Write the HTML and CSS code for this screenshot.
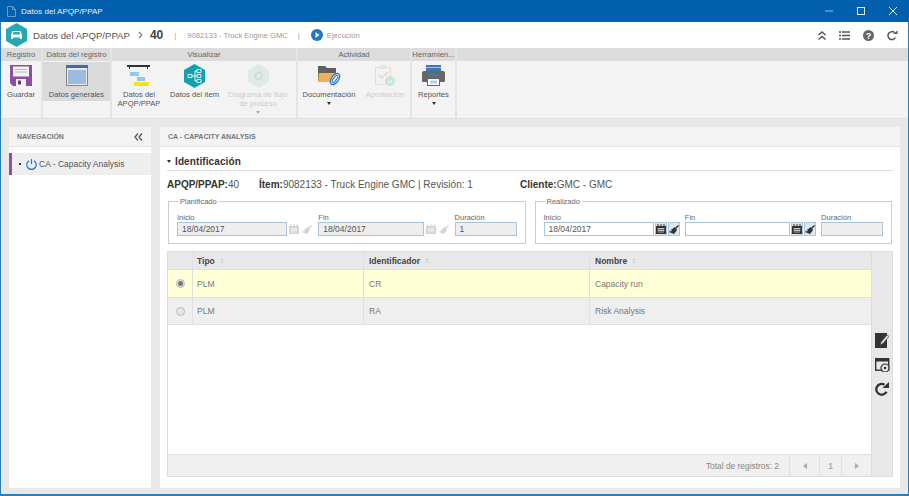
FILE: index.html
```html
<!DOCTYPE html>
<html lang="es">
<head>
<meta charset="utf-8">
<title>Datos del APQP/PPAP</title>
<link rel="stylesheet" href="styles.css">
</head>
<body>
<div class="window">
  <div class="titlebar">
    <svg class="doc-ico" width="9" height="11" viewBox="0 0 9 11"><path d="M.5 .5h5l3 3v7H.5z M5.500 .5v3h3" fill="none" stroke="#6b9cc8"/></svg>
    <span class="title-text">Datos del APQP/PPAP</span>
    <div class="win-btns">
      <svg width="10" height="10" viewBox="0 0 10 10"><path d="M1 5h8" stroke="#8fbbe0"/></svg>
      <svg width="10" height="10" viewBox="0 0 10 10"><rect x="1.500" y="1.500" width="7" height="7" fill="none" stroke="#e0edf8"/></svg>
      <svg width="10" height="10" viewBox="0 0 10 10"><path d="M1 1l8 8M9 1l-8 8" stroke="#e0edf8"/></svg>
    </div>
  </div>
  <div class="head">
    <svg class="logo" width="21" height="24" viewBox="0 0 21 24"><path d="M10.500 0L21 6V18L10.500 24L0 18V6z" fill="#2aa7b5"/><path d="M5 16v-4l1.500-4h8L16 12v4h-2v-1.500H7V16zM7.500 9L6.800 11.500h7.400L13.500 9z" fill="#fff" fill-rule="evenodd"/></svg>
    <span class="crumb">Datos del APQP/PPAP</span>
    <svg class="chev" width="5" height="8" viewBox="0 0 5 8"><path d="M1 1l3 3-3 3" fill="none" stroke="#777" stroke-width="1.100"/></svg>
    <span class="num">40</span>
    <span class="sep">|</span>
    <span class="item">9082133 - Truck Engine GMC</span>
    <span class="sep sep2">|</span>
    <svg class="play" width="12" height="12" viewBox="0 0 12 12"><circle cx="6" cy="6" r="6" fill="#1f78c8"/><path d="M4.500 3l4 3-4 3z" fill="#fff"/></svg>
    <span class="state">Ejecución</span>
    <div class="head-tools">
      <svg width="10" height="11" viewBox="0 0 10 11"><path d="M1.500 5l3.500-3 3.500 3M1.500 9.500l3.500-3 3.500 3" fill="none" stroke="#555" stroke-width="1.500"/></svg>
      <svg width="11" height="9" viewBox="0 0 11 9"><path d="M0 1h2M3 1h8M0 4.500h2M3 4.500h8M0 8h2M3 8h8" stroke="#555" stroke-width="1.400"/></svg>
      <svg width="11" height="11" viewBox="0 0 11 11"><circle cx="5.500" cy="5.500" r="5.500" fill="#666"/><text x="5.500" y="8.700" class="q">?</text></svg>
      <svg width="12" height="11" viewBox="0 0 12 11"><path d="M9.500 7.500A4 4 0 1 1 8.500 2.500" fill="none" stroke="#555" stroke-width="1.500"/><path d="M7 4h4.500V.5z" fill="#555"/></svg>
    </div>
  </div>

  <div class="ribbon">
    <section class="group g-reg">
      <h6>Registro</h6>
      <div class="g-body">
        <div class="rb">
          <svg width="22" height="21" viewBox="0 0 22 21"><path d="M0 0h22v21H3l-3-3z" fill="#8d4f9f"/><rect x="3" y="1.500" width="16" height="10" fill="#f2f2f2"/><path d="M5 4.500h12M5 7h12" stroke="#bbb"/><rect x="6" y="14" width="10" height="7" fill="#f2f2f2"/><rect x="8" y="15.500" width="3" height="4" fill="#6a3a7c"/></svg>
          <span>Guardar</span>
        </div>
      </div>
    </section>
    <section class="group g-dat">
      <h6>Datos del registro</h6>
      <div class="g-body">
        <div class="rb rb-active">
          <svg width="22" height="21" viewBox="0 0 22 21"><rect x=".5" y=".5" width="21" height="20" fill="#e8e8e8" stroke="#888"/><rect width="22" height="3" fill="#3c6ea8"/><rect x="2" y="5" width="18" height="14" fill="#9dbbdc"/></svg>
          <span>Datos generales</span>
        </div>
      </div>
    </section>
    <section class="group g-vis">
      <h6>Visualizar</h6>
      <div class="g-body">
        <div class="rb rb-1">
          <svg width="24" height="21" viewBox="0 0 24 21"><path d="M0 0h23v2h-2v2h-1V2H3v2H2V2H0z" fill="#333"/><rect x="3" y="7" width="9" height="4" fill="#8ec9f5"/><rect x="10" y="12" width="8" height="4" fill="#8ec9f5"/><rect x="7" y="17" width="15" height="4" fill="#f4e318"/></svg>
          <span>Datos del<br>APQP/PPAP</span>
        </div>
        <div class="rb rb-2">
          <svg width="21" height="24" viewBox="0 0 21 24"><path d="M10.500 0L21 6v12l-10.500 6L0 18V6z" fill="#14a0ad"/><path d="M13 5.500h4v3h-4zM13 10.500h4v3h-4zM13 15.500h4v3h-4zM4 10.500h4v3H4z" fill="none" stroke="#dff4f6"/><path d="M8 12h5M11 7v10h2M11 7h2" fill="none" stroke="#dff4f6"/></svg>
          <span>Datos del ítem</span>
        </div>
        <div class="rb rb-3 off">
          <svg width="21" height="24" viewBox="0 0 21 24"><path d="M10.500 0L21 6v12l-10.500 6L0 18V6z" fill="#dfeae7"/><path d="M7 12l3-4 4 1-1 6-5 0z" fill="none" stroke="#c4d6d2"/></svg>
          <span>Diagrama de flujo<br>de proceso</span>
          <i class="caret"></i>
        </div>
      </div>
    </section>
    <section class="group g-act">
      <h6>Actividad</h6>
      <div class="g-body">
        <div class="rb rb-4">
          <svg width="23" height="21" viewBox="0 0 23 21"><path d="M0 1h7l2 2h9v3H0z" fill="#5f5f5f"/><path d="M0 17V5h18v12z" fill="#5f5f5f"/><path d="M1 8h18l-1 9H0z" fill="#eeb158"/><ellipse cx="17" cy="14" rx="3.500" ry="6.500" transform="rotate(35 17 14)" fill="#f2f2f2" stroke="#2e78c4" stroke-width="1.300"/><ellipse cx="17" cy="14" rx="1.500" ry="4.500" transform="rotate(35 17 14)" fill="none" stroke="#2e78c4"/></svg>
          <span>Documentación</span>
          <i class="caret dark"></i>
        </div>
        <div class="rb rb-5 off">
          <svg width="20" height="21" viewBox="0 0 20 21"><rect x=".5" y="2.500" width="15" height="17" fill="none" stroke="#eadfca"/><rect x="5" y="0" width="6" height="4" fill="#e5e5e5"/><path d="M4 10l3 3 6-6" fill="none" stroke="#f0cfc8" stroke-width="1.500"/><circle cx="15" cy="16" r="5" fill="#c8e4dc"/><path d="M12.500 16l2 2 3-3.500" fill="none" stroke="#fff"/></svg>
          <span>Aprobación</span>
        </div>
      </div>
    </section>
    <section class="group g-her">
      <h6>Herramien...</h6>
      <div class="g-body">
        <div class="rb rb-6">
          <svg width="23" height="21" viewBox="0 0 23 21"><rect x="4" y="0" width="15" height="8" fill="#3f77b5"/><rect x="4" y="2" width="15" height="1" fill="#a8c6e6"/><path d="M2 6h19a2 2 0 0 1 2 2v8a1 1 0 0 1-1 1H1a1 1 0 0 1-1-1V8a2 2 0 0 1 2-2z" fill="#666"/><rect x="5" y="9" width="13" height="2" fill="#3f77b5"/><rect x="5.500" y="13.500" width="12" height="7" fill="#fff" stroke="#666"/><rect x="8" y="15.500" width="7" height="3" fill="#b6cfe8"/></svg>
          <span>Reportes</span>
          <i class="caret dark"></i>
        </div>
      </div>
    </section>
    <section class="group g-fill">
      <h6></h6>
      <div class="g-body"></div>
    </section>
  </div>

  <div class="content">
    <aside class="nav">
      <div class="panel-head">
        <span>NAVEGACIÓN</span>
        <svg width="9" height="8" viewBox="0 0 9 8"><path d="M4 .5L1 4l3 3.500M8 .5L5 4l3 3.500" fill="none" stroke="#555" stroke-width="1.300"/></svg>
      </div>
      <div class="nav-item">
        <span class="bullet"></span>
        <svg width="11" height="11" viewBox="0 0 11 11"><path d="M5.500 0v5" stroke="#1f78c8" stroke-width="1.200"/><path d="M3 1.700a4.700 4.700 0 1 0 5 0" fill="none" stroke="#1f78c8" stroke-width="1.200"/></svg>
        <span>CA - Capacity Analysis</span>
      </div>
    </aside>

    <main class="main">
      <div class="panel-head main-head"><span>CA - CAPACITY ANALYSIS</span></div>
      <div class="main-body">
        <div class="sec-title"><i class="caret dark"></i><span>Identificación</span></div>
        <div class="info">
          <div class="info-a"><b>APQP/PPAP:</b>40</div>
          <div class="info-b"><b>Ítem:</b>9082133 - Truck Engine GMC | Revisión: 1</div>
          <div class="info-c"><b>Cliente:</b>GMC - GMC</div>
        </div>
        <div class="sets">
          <fieldset class="set">
            <legend>Planificado</legend>
            <div class="field f-date">
              <label>Inicio</label>
              <div class="ctl"><div class="input ro">18/04/2017</div><span class="btn-cal off-b"><svg width="10" height="10" viewBox="0 0 10 10"><use href="#cal"/></svg></span><span class="btn-cal off-b"><svg width="10" height="10" viewBox="0 0 10 10"><use href="#brush"/></svg></span></div>
            </div>
            <div class="field f-date f-date2">
              <label>Fin</label>
              <div class="ctl"><div class="input ro">18/04/2017</div><span class="btn-cal off-b"><svg width="10" height="10" viewBox="0 0 10 10"><use href="#cal"/></svg></span><span class="btn-cal off-b"><svg width="10" height="10" viewBox="0 0 10 10"><use href="#brush"/></svg></span></div>
            </div>
            <div class="field f-dur">
              <label>Duración</label>
              <div class="ctl"><div class="input ro">1</div></div>
            </div>
          </fieldset>
          <fieldset class="set">
            <legend>Realizado</legend>
            <div class="field f-date">
              <label>Inicio</label>
              <div class="ctl"><div class="input">18/04/2017</div><span class="btn-cal on-b"><svg width="10" height="10" viewBox="0 0 10 10"><use href="#cal"/></svg></span><span class="btn-cal on-b"><svg width="10" height="10" viewBox="0 0 10 10"><use href="#brush"/></svg></span></div>
            </div>
            <div class="field f-date f-date2">
              <label>Fin</label>
              <div class="ctl"><div class="input"></div><span class="btn-cal on-b"><svg width="10" height="10" viewBox="0 0 10 10"><use href="#cal"/></svg></span><span class="btn-cal on-b"><svg width="10" height="10" viewBox="0 0 10 10"><use href="#brush"/></svg></span></div>
            </div>
            <div class="field f-dur">
              <label>Duración</label>
              <div class="ctl"><div class="input ro"></div></div>
            </div>
          </fieldset>
        </div>

        <div class="grid-wrap">
          <div class="grid-left">
            <div class="row row-h">
              <div class="c c0"></div>
              <div class="c c1">Tipo <i class="sort"></i></div>
              <div class="c c2">Identificador <i class="sort"></i></div>
              <div class="c c3">Nombre <i class="sort"></i></div>
            </div>
            <div class="row row-sel">
              <div class="c c0"><span class="radio checked"></span></div>
              <div class="c c1">PLM</div>
              <div class="c c2">CR</div>
              <div class="c c3">Capacity run</div>
            </div>
            <div class="row row-alt">
              <div class="c c0"><span class="radio"></span></div>
              <div class="c c1">PLM</div>
              <div class="c c2">RA</div>
              <div class="c c3">Risk Analysis</div>
            </div>
            <div class="grid-empty"></div>
            <div class="grid-foot">
              <span class="total">Total de registros: 2</span>
              <span class="pg"><i class="tri-l"></i></span>
              <span class="pg pg-n">1</span>
              <span class="pg"><i class="tri-r"></i></span>
            </div>
          </div>
          <div class="grid-tools">
            <svg width="14" height="15" viewBox="0 0 14 15"><rect width="12" height="15" fill="#333"/><path d="M5 12l1-3 6-7 2 1.500-6 7z" fill="#ddd" stroke="#333" stroke-width=".6"/></svg>
            <svg width="15" height="14" viewBox="0 0 15 14"><rect x=".7" y=".7" width="13" height="11.500" fill="none" stroke="#333" stroke-width="1.400"/><rect x="1" y="1" width="13" height="2.500" fill="#333"/><circle cx="10" cy="10" r="4" fill="#e6e6e6" stroke="#333" stroke-width="1.200"/><circle cx="10" cy="10" r="1.300" fill="#333"/></svg>
            <svg width="14" height="14" viewBox="0 0 14 14"><path d="M11.500 9.800A5.400 5.400 0 1 1 9.500 2.700" fill="none" stroke="#333" stroke-width="2.300"/><path d="M7.500 6H14V0z" fill="#333"/></svg>
          </div>
        </div>
      </div>
    </main>
  </div>
</div>
<svg class="defs" width="0" height="0">
  <symbol id="cal" viewBox="0 0 10 10"><path d="M0 2h10v8H0z" fill="currentColor"/><path d="M2 0v3M5 0v3M8 0v3" stroke="currentColor"/><path d="M1.500 4.500h7M1.500 6.500h7M3 4v5M5 4v5M7 4v5" stroke="#fff" stroke-width=".6"/></symbol>
  <symbol id="brush" viewBox="0 0 10 10"><path d="M6 4l3-3 1 1-3 3z" fill="currentColor"/><path d="M6 3l2 3-3 4-5-2 1-1 1 .5 1-1.500-2 .5z" fill="currentColor"/></symbol>
</svg>
</body>
</html>
```

FILE: styles.css
```css
* { box-sizing: border-box; }
html, body { margin: 0; padding: 0; }
body { width: 909px; height: 496px; overflow: hidden; font-family: "Liberation Sans", Arial, sans-serif; color: #444; }
.defs { display: block; height: 0; }
.window { width: 909px; height: 496px; display: flex; flex-direction: column; border: 1px solid #2a7cc0; border-top: 0; border-bottom-width: 2px; background: #e8e8e8; }

.titlebar { height: 22px; flex: none; margin: 0 -1px; background: #0060ae; display: flex; align-items: center; padding-left: 7px; color: #e6f0f8; font-size: 8.100px; }
.doc-ico { margin-right: 5px; }
.win-btns { margin-left: auto; display: flex; gap: 22px; padding-right: 11px; }

.head { height: 26px; flex: none; background: #fff; display: flex; align-items: center; padding-left: 5px; }
.crumb { margin-left: 6px; font-size: 9.600px; color: #555; }
.chev { margin-left: 8px; }
.num { margin-left: 7px; font-size: 12px; font-weight: bold; color: #444; }
.sep { margin-left: 11px; font-size: 8px; color: #aaa; }
.item { margin-left: 11px; font-size: 7.600px; color: #999; }
.sep2 { margin-left: 10px; }
.play { margin-left: 11px; }
.state { margin-left: 4px; font-size: 7.600px; color: #999; }
.head-tools { margin-left: auto; display: flex; gap: 12.500px; align-items: center; padding-right: 10px; }
.q { font: bold 9px "Liberation Sans", sans-serif; fill: #fff; text-anchor: middle; }

.ribbon { height: 71px; flex: none; display: flex; gap: 2px; background: #e4e4e4; border-bottom: 1px solid #e0e0e0; }
.group { display: flex; flex-direction: column; flex: none; }
.group h6 { margin: 0; height: 13px; flex: none; background: #dcdcdc; font-size: 7.700px; font-weight: normal; color: #666; text-align: center; line-height: 13px; white-space: nowrap; overflow: hidden; }
.g-body { flex: 1; background: #f3f3f3; display: flex; padding-top: 1px; }
.g-reg { width: 40px; }
.g-dat { width: 67px; }
.g-vis { width: 184px; }
.g-act { width: 112px; }
.g-her { width: 43px; }
.g-fill { flex: 1; }
.rb { display: flex; flex-direction: column; align-items: center; font-size: 7.600px; color: #555; text-align: center; line-height: 9px; padding-top: 3px; white-space: nowrap; }
.rb svg { flex: none; margin-bottom: 4px; }
.rb span { display: block; }
.g-reg .rb { width: 40px; }
.g-dat .rb { width: 67px; height: 39px; }
.rb-active { background: #dadada; }
.rb-1 { width: 54px; }
.rb-2 { width: 57px; padding-top: 2px; }
.rb-3 { width: 70px; padding-top: 2px; }
.rb-2 svg, .rb-3 svg { margin-bottom: 2px; }
.rb-4 { width: 62px; }
.rb-5 { width: 50px; }
.rb-6 { width: 43px; }
.off { color: #ccc; }
.caret { display: block; width: 0; height: 0; border: 2.500px solid transparent; border-top: 3px solid #aaa; border-bottom: 0; margin-top: 3px; }
.caret.dark { border-top-color: #333; }

.content { flex: 1; min-height: 0; display: flex; gap: 9px; padding: 8px 8px 6px 8px; }
.nav { width: 142px; flex: none; background: #fff; }
.main { flex: 1; background: #fff; display: flex; flex-direction: column; min-width: 0; }
.panel-head { height: 20px; background: #f3f3f3; border-bottom: 1px solid #e2e2e2; display: flex; align-items: center; justify-content: space-between; padding: 0 8px; font-size: 7px; font-weight: bold; color: #777; }
.main-head { justify-content: flex-start; }
.nav-item { margin-top: 6px; height: 22px; background: #eee; border-left: 3px solid #8f4fa3; display: flex; align-items: center; font-size: 8.500px; color: #555; padding-left: 7px; gap: 2px; }
.bullet { width: 2px; height: 2px; background: #333; margin-right: 3px; }

.main-body { flex: 1; min-height: 0; display: flex; flex-direction: column; padding: 0 7px 11px 7px; }
.sec-title { height: 24px; flex: none; border-bottom: 1px solid #ddd; display: flex; align-items: center; gap: 4px; font-size: 10px; font-weight: bold; color: #333; letter-spacing: .1px; padding-top: 7px; padding-bottom: 2px; }
.sec-title .caret { margin-top: 0; }
.info { display: flex; height: 26px; flex: none; align-items: center; font-size: 10px; color: #555; }
.info b { color: #333; }
.info-a { width: 92px; }
.info-b { width: 261px; }

.sets { display: flex; gap: 9px; flex: none; padding: 0 1px; height: 47px; }
.set { flex: 1; margin: 0; padding: 0 8px; border: 1px solid #ccc; display: flex; align-items: flex-start; height: 47px; min-width: 0; }
.set legend { font-size: 7.500px; color: #666; padding: 0 2px; line-height: 9px; margin-left: 1px; }
.set .field { margin-top: 7px; }
.field { display: flex; flex-direction: column; }
.field label { font-size: 7.500px; color: #666; line-height: 9px; height: 9px; }
.f-date { width: 141.500px; padding-right: 5px; }
.f-date2 { width: 136.500px; }
.f-dur { width: 62px; }
.ctl { display: flex; gap: 1px; height: 14px; }
.input { flex: 1; min-width: 0; height: 14px; border: 1px solid #a9c5dc; background: #fff; font-size: 8.500px; line-height: 12px; padding-left: 4px; color: #555; }
.input.ro { background: #eee; }
.btn-cal { width: 12px; height: 14px; flex: none; display: flex; align-items: center; justify-content: center; }
.off-b { color: #d2d2d2; }
.on-b { color: #333; background: #dbe7f1; border: 1px solid #a9c5dc; }
.off-b svg, .on-b svg { display: block; }

.grid-wrap { margin-top: 7px; flex: 1; min-height: 0; display: flex; border: 1px solid #ddd; }
.grid-left { flex: 1; min-width: 0; display: flex; flex-direction: column; }
.row { display: flex; flex: none; font-size: 8.500px; color: #777; border-bottom: 1px solid #e0e0e0; }
.c { display: flex; align-items: center; padding-left: 4px; border-right: 1px solid #e0e0e0; gap: 4px; }
.c0 { width: 25px; justify-content: center; padding: 0; }
.c1 { width: 171px; }
.c2 { width: 226px; padding-left: 5px; }
.c3 { flex: 1; border-right: 0; padding-left: 5px; }
.row-h { height: 18px; background: #e8e8e8; font-weight: bold; color: #444; }
.row-sel { height: 28px; background: #ffffd8; }
.row-alt { height: 27px; background: #efefef; }
.sort { display: flex; flex-direction: column; gap: 1px; margin-left: 1px; }
.sort::before { content: ""; border: 2px solid transparent; border-bottom: 2.500px solid #cfcfcf; border-top: 0; }
.sort::after { content: ""; border: 2px solid transparent; border-top: 2.500px solid #cfcfcf; border-bottom: 0; }
.radio { width: 9px; height: 9px; border-radius: 50%; background: #e4e4e4; border: 1px solid #bbb; display: flex; align-items: center; justify-content: center; }
.radio.checked::after { content: ""; width: 5px; height: 5px; border-radius: 50%; background: #777; }
.grid-empty { flex: 1; }
.grid-foot { height: 22px; flex: none; background: #f0f0f0; border-top: 1px solid #e0e0e0; display: flex; align-items: center; justify-content: flex-end; font-size: 8.400px; color: #888; }
.total { margin-right: 10px; }
.pg { width: 30px; height: 100%; border-left: 1px solid #e0e0e0; display: flex; align-items: center; justify-content: center; }
.pg-n { width: 22px; font-weight: bold; color: #aaa; }
.tri-l { border: 3px solid transparent; border-right: 4px solid #aaa; border-left: 0; }
.tri-r { border: 3px solid transparent; border-left: 4px solid #aaa; border-right: 0; }
.grid-tools { width: 21px; flex: none; background: #e8e8e8; border-left: 1px solid #ddd; display: flex; flex-direction: column; align-items: center; gap: 10px; padding-top: 81px; }
```
